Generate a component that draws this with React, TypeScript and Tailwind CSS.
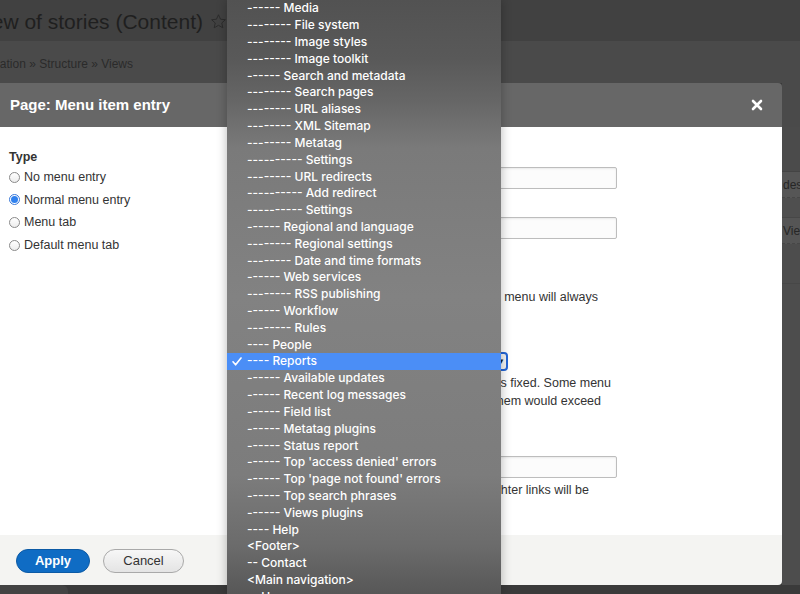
import React from "react";

const menuItems = [
  "------ Media",
  "-------- File system",
  "-------- Image styles",
  "-------- Image toolkit",
  "------ Search and metadata",
  "-------- Search pages",
  "-------- URL aliases",
  "-------- XML Sitemap",
  "-------- Metatag",
  "---------- Settings",
  "-------- URL redirects",
  "---------- Add redirect",
  "---------- Settings",
  "------ Regional and language",
  "-------- Regional settings",
  "-------- Date and time formats",
  "------ Web services",
  "-------- RSS publishing",
  "------ Workflow",
  "-------- Rules",
  "---- People",
  "---- Reports",
  "------ Available updates",
  "------ Recent log messages",
  "------ Field list",
  "------ Metatag plugins",
  "------ Status report",
  "------ Top 'access denied' errors",
  "------ Top 'page not found' errors",
  "------ Top search phrases",
  "------ Views plugins",
  "---- Help",
  "<Footer>",
  "-- Contact",
  "<Main navigation>",
  "-- Home",
];

const selected = "---- Reports";

function Radio({ checked }: { checked?: boolean }) {
  if (checked) {
    return (
      <span className="w-[11px] h-[11px] rounded-full border border-[#3a78d8] bg-white flex items-center justify-center shrink-0">
        <span className="w-[7px] h-[7px] rounded-full bg-[#2f81ee]" />
      </span>
    );
  }
  return <span className="w-[11px] h-[11px] rounded-full border border-[#8a8a8a] bg-gradient-to-b from-white to-[#ededed] shrink-0" />;
}

function TextInput() {
  return <div className="w-[377px] h-[22px] border border-[#bdbdbd] rounded-[2px] bg-[#fcfcfc] shadow-[inset_0_1px_2px_rgba(0,0,0,0.08)]" />;
}

function Line({ width, children }: { width: string; children: React.ReactNode }) {
  return (
    <div className={`${width} h-[18px] leading-[18px] overflow-hidden whitespace-nowrap flex justify-end text-[#333]`}>
      <span>{children}</span>
    </div>
  );
}

export default function App() {
  return (
    <div className="relative w-[800px] h-[594px] overflow-hidden bg-[#3a3a3a] text-[12.5px]" style={{ fontFamily: '"Liberation Sans", Arial, sans-serif' }}>
      {/* page behind the overlay */}
      <div className="h-[41px] bg-[#414141] flex items-center pt-[2px]">
        <div className="w-[203px] overflow-hidden whitespace-nowrap flex justify-end">
          <span className="text-[21px] text-[#1f1f1f]">Overview of stories (Content)</span>
        </div>
        <svg className="ml-[7px]" width="17" height="17" viewBox="0 0 24 24" fill="none" stroke="#2c2c2c" strokeWidth="1.4" strokeLinejoin="round">
          <path d="M12 2.5l2.9 6.3 6.8.7-5.1 4.6 1.5 6.8L12 17.4l-6.1 3.5 1.5-6.8-5.1-4.6 6.8-.7z" />
        </svg>
      </div>
      <div className="h-[42px] bg-[#4a4a4a] flex items-center pt-[3px]">
        <div className="w-[133px] overflow-hidden whitespace-nowrap flex justify-end">
          <span className="text-[12px] text-[#2a2a2a]">Administration » Structure » Views</span>
        </div>
      </div>

      <div className="flex h-[502px]">
        {/* dialog */}
        <div className="w-[782px] flex flex-col shadow-[1px_0_0_#2e2e2e]">
          <div className="h-[44px] bg-[#676767] rounded-tr-[4px] flex items-center justify-between pl-[10px] pr-[19px]">
            <span className="text-white font-bold text-[15px]">Page: Menu item entry</span>
            <svg width="12" height="12" viewBox="0 0 12 12" stroke="white" strokeWidth="2.6" strokeLinecap="round">
              <path d="M2 2l8 8M10 2l-8 8" />
            </svg>
          </div>

          <div className="h-[408px] bg-white flex">
            <div className="w-[240px] pl-[9px] pt-[23px] flex flex-col text-[#333]">
              <div className="font-bold h-[15px] leading-[15px] mb-[1px]">Type</div>
              {[
                ["No menu entry", false],
                ["Normal menu entry", true],
                ["Menu tab", false],
                ["Default menu tab", false],
              ].map(([label, checked]) => (
                <div key={label as string} className="h-[22.6px] flex items-center gap-[4px]">
                  <Radio checked={checked as boolean} />
                  <span>{label as string}</span>
                </div>
              ))}
            </div>

            <div className="flex-1 flex flex-col">
              <div className="mt-[40px]">
                <TextInput />
              </div>
              <div className="mt-[28px]">
                <TextInput />
              </div>
              <div className="mt-[49px]">
                <Line width="w-[358px]">If selected and this menu item has children, the menu will always</Line>
              </div>
              <div className="mt-[46px] w-[268px] h-[19px] border-2 border-[#2466d6] rounded-[4px] bg-[#f4f4f4] flex items-center justify-end pr-[1px]">
                <span className="text-[8px] leading-none text-[#222]">▼</span>
              </div>
              <div className="mt-[3px]">
                <Line width="w-[371px]">The maximum depth for an item and all its children is fixed. Some menu</Line>
                <Line width="w-[361px]">items may not be available as parents if selecting them would exceed</Line>
              </div>
              <div className="mt-[46px]">
                <TextInput />
              </div>
              <div className="mt-[3px]">
                <Line width="w-[349px]">In the menu, the heavier links will sink and the lighter links will be</Line>
              </div>
            </div>
          </div>

          <div className="h-[50px] bg-[#f4f4f2] rounded-br-[4px] flex items-center pl-[16px] gap-[13px] pt-[1px]">
            <button className="w-[74px] h-[24px] rounded-full bg-[#0f6cc4] text-white font-bold text-[13px] border border-[#0c5aa5]">
              Apply
            </button>
            <button className="w-[81px] h-[24px] rounded-full bg-gradient-to-b from-[#f7f7f7] to-[#e4e4e4] border border-[#a9a9a9] text-[#333] text-[13px]">
              Cancel
            </button>
          </div>
        </div>

        {/* page content peeking at the right */}
        <div className="flex-1 bg-[#4d4d4d] flex flex-col overflow-hidden">
          <div className="h-[44px] bg-[#4a4a4a]" />
          <div className="h-[45px] bg-[#4b4b4b] border-b border-[#444]" />
          <div className="h-[26px] bg-[#565656] border-b border-dashed border-[#474747] pl-[1px] flex items-center text-[12px] text-[#262626] whitespace-nowrap">des</div>
          <div className="h-[20px] bg-[#4f4f4f] border-b border-[#474747]" />
          <div className="h-[26px] bg-[#555] border-b border-dashed border-[#474747] pl-[1px] flex items-center text-[12px] text-[#262626] whitespace-nowrap">View</div>
          <div className="h-[40px] border-b border-[#474747]" />
        </div>
      </div>

      <div className="h-[9px] bg-[#3a3a3a]">
        <div className="w-[68px] h-full bg-[#434343] rounded-tr-[6px]" />
      </div>

      {/* open select popup */}
      <div
        className="absolute left-[227px] top-0 w-[274px] h-[594px] overflow-hidden z-10 shadow-[0_0_10px_rgba(0,0,0,0.28)] bg-[linear-gradient(to_bottom,#525252_0%,#595959_10%,#666_17%,#7a7a7a_25%,#828282_50%,#7c7c7c_80%,#6b6b6b_92%,#575757_100%)]"
        style={{ fontFamily: "Inter, sans-serif" }}
      >
        {menuItems.map((item, i) => {
          const active = item === selected;
          return (
            <div
              key={i}
              className={`relative h-[16.82px] flex items-center pl-[20px] text-[12px] font-medium text-white whitespace-nowrap ${active ? "bg-[#4b8ef6]" : ""}`}
            >
              {active && (
                <svg className="absolute left-[5px]" width="10" height="9" viewBox="0 0 10 9" fill="none" stroke="white" strokeWidth="1.6" strokeLinecap="round" strokeLinejoin="round">
                  <path d="M1 4.8l2.6 3L9 1" />
                </svg>
              )}
              <span>{item}</span>
            </div>
          );
        })}
      </div>
    </div>
  );
}
